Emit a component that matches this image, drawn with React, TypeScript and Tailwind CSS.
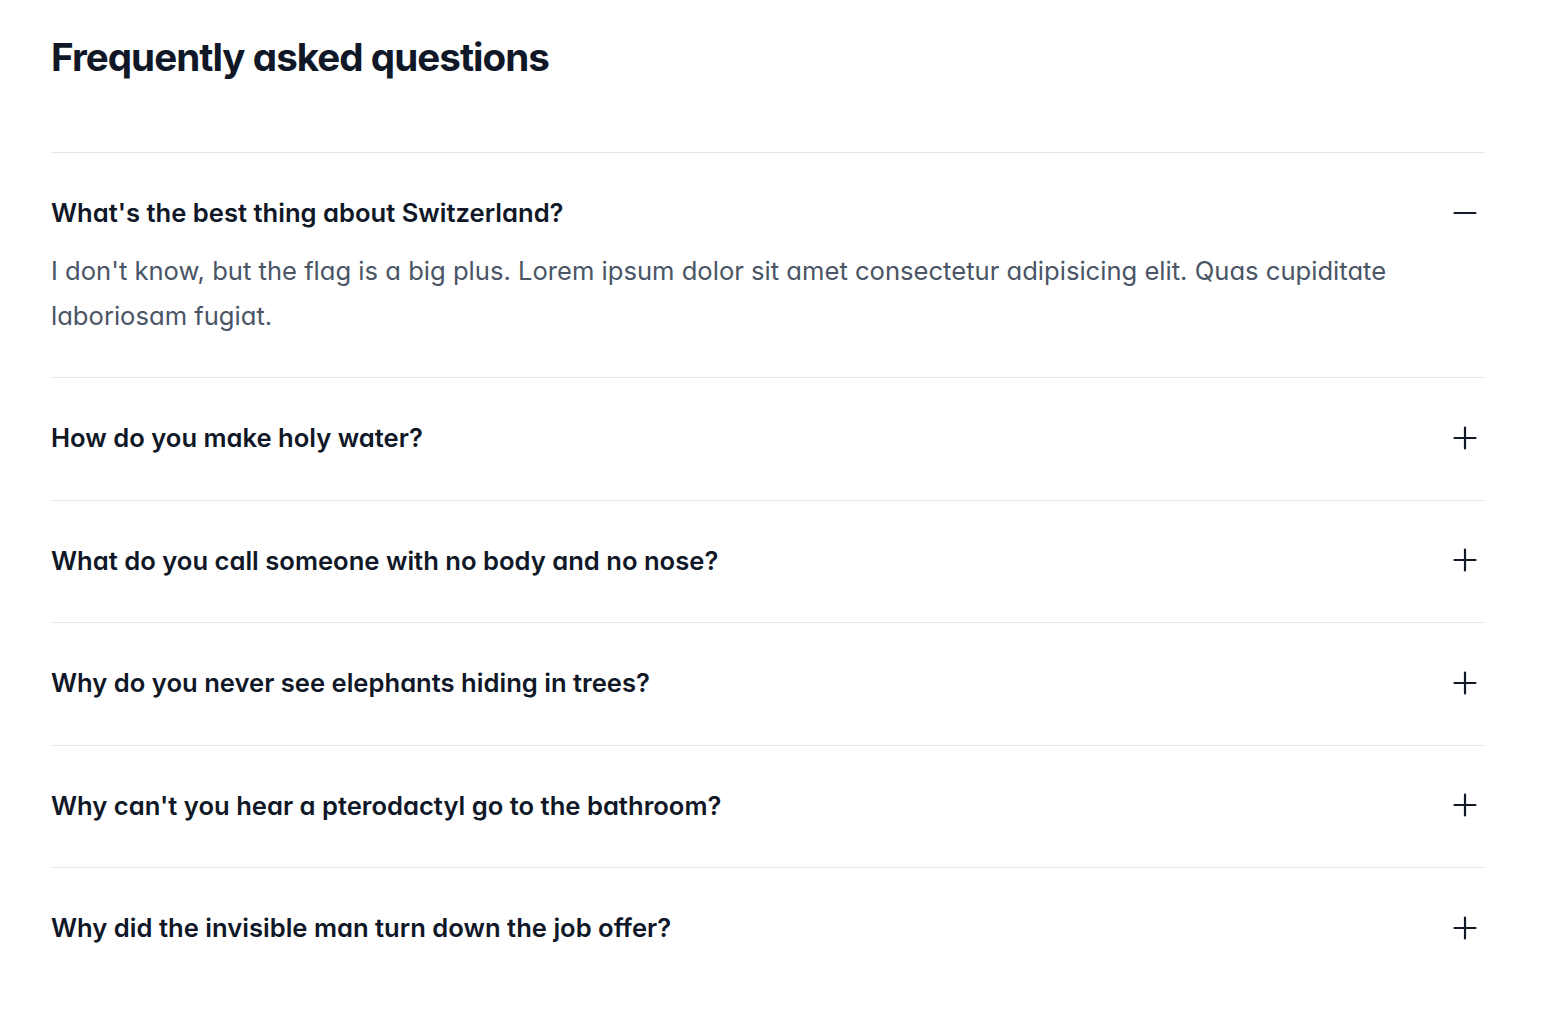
import React from "react";

const faqs = [
  {
    q: "What's the best thing about Switzerland?",
    a: "I don't know, but the flag is a big plus. Lorem ipsum dolor sit amet consectetur adipisicing elit. Quas cupiditate laboriosam fugiat.",
    open: true,
  },
  { q: "How do you make holy water?", open: false },
  { q: "What do you call someone with no body and no nose?", open: false },
  { q: "Why do you never see elephants hiding in trees?", open: false },
  { q: "Why can't you hear a pterodactyl go to the bathroom?", open: false },
  { q: "Why did the invisible man turn down the job offer?", open: false },
];

function Icon({ open }: { open: boolean }) {
  return (
    <svg width="24" height="24" viewBox="0 0 24 24" fill="none" stroke="#111827" strokeWidth={2.2} strokeLinecap="round">
      {open ? <path d="M1.5 12h21" /> : <path d="M12 1.5v21M1.5 12h21" />}
    </svg>
  );
}

export default function App() {
  return (
    <div
      className="min-h-screen bg-white text-gray-900"
      style={{ fontFamily: "Inter, 'Noto Sans', sans-serif", fontFeatureSettings: "'cv11'" }}
    >
      <div className="pl-[51px] pr-[62px] pt-[25px]">
        <h2 className="text-[38.6px] leading-[64px] font-bold tracking-tight text-gray-900">
          Frequently asked questions
        </h2>
        <dl className="mt-[63px]">
          {faqs.map((f, i) => (
            <div
              key={i}
              className={`border-t border-[#e7e7e9] pt-[37px] ${f.open ? "pb-[39px]" : "pb-[39.5px]"}`}
            >
              <dt>
                <button className="flex w-full items-start justify-between text-left text-gray-900">
                  <span className="text-[25.6px] leading-[45px] font-semibold">{f.q}</span>
                  <span className="ml-9 mr-[8px] flex h-[45px] items-center">
                    <Icon open={f.open} />
                  </span>
                </button>
              </dt>
              {f.open && (
                <dd className="mt-[13px] pr-[77px]">
                  <p className="text-[25.6px] leading-[45px] text-gray-600">{f.a}</p>
                </dd>
              )}
            </div>
          ))}
        </dl>
      </div>
    </div>
  );
}
